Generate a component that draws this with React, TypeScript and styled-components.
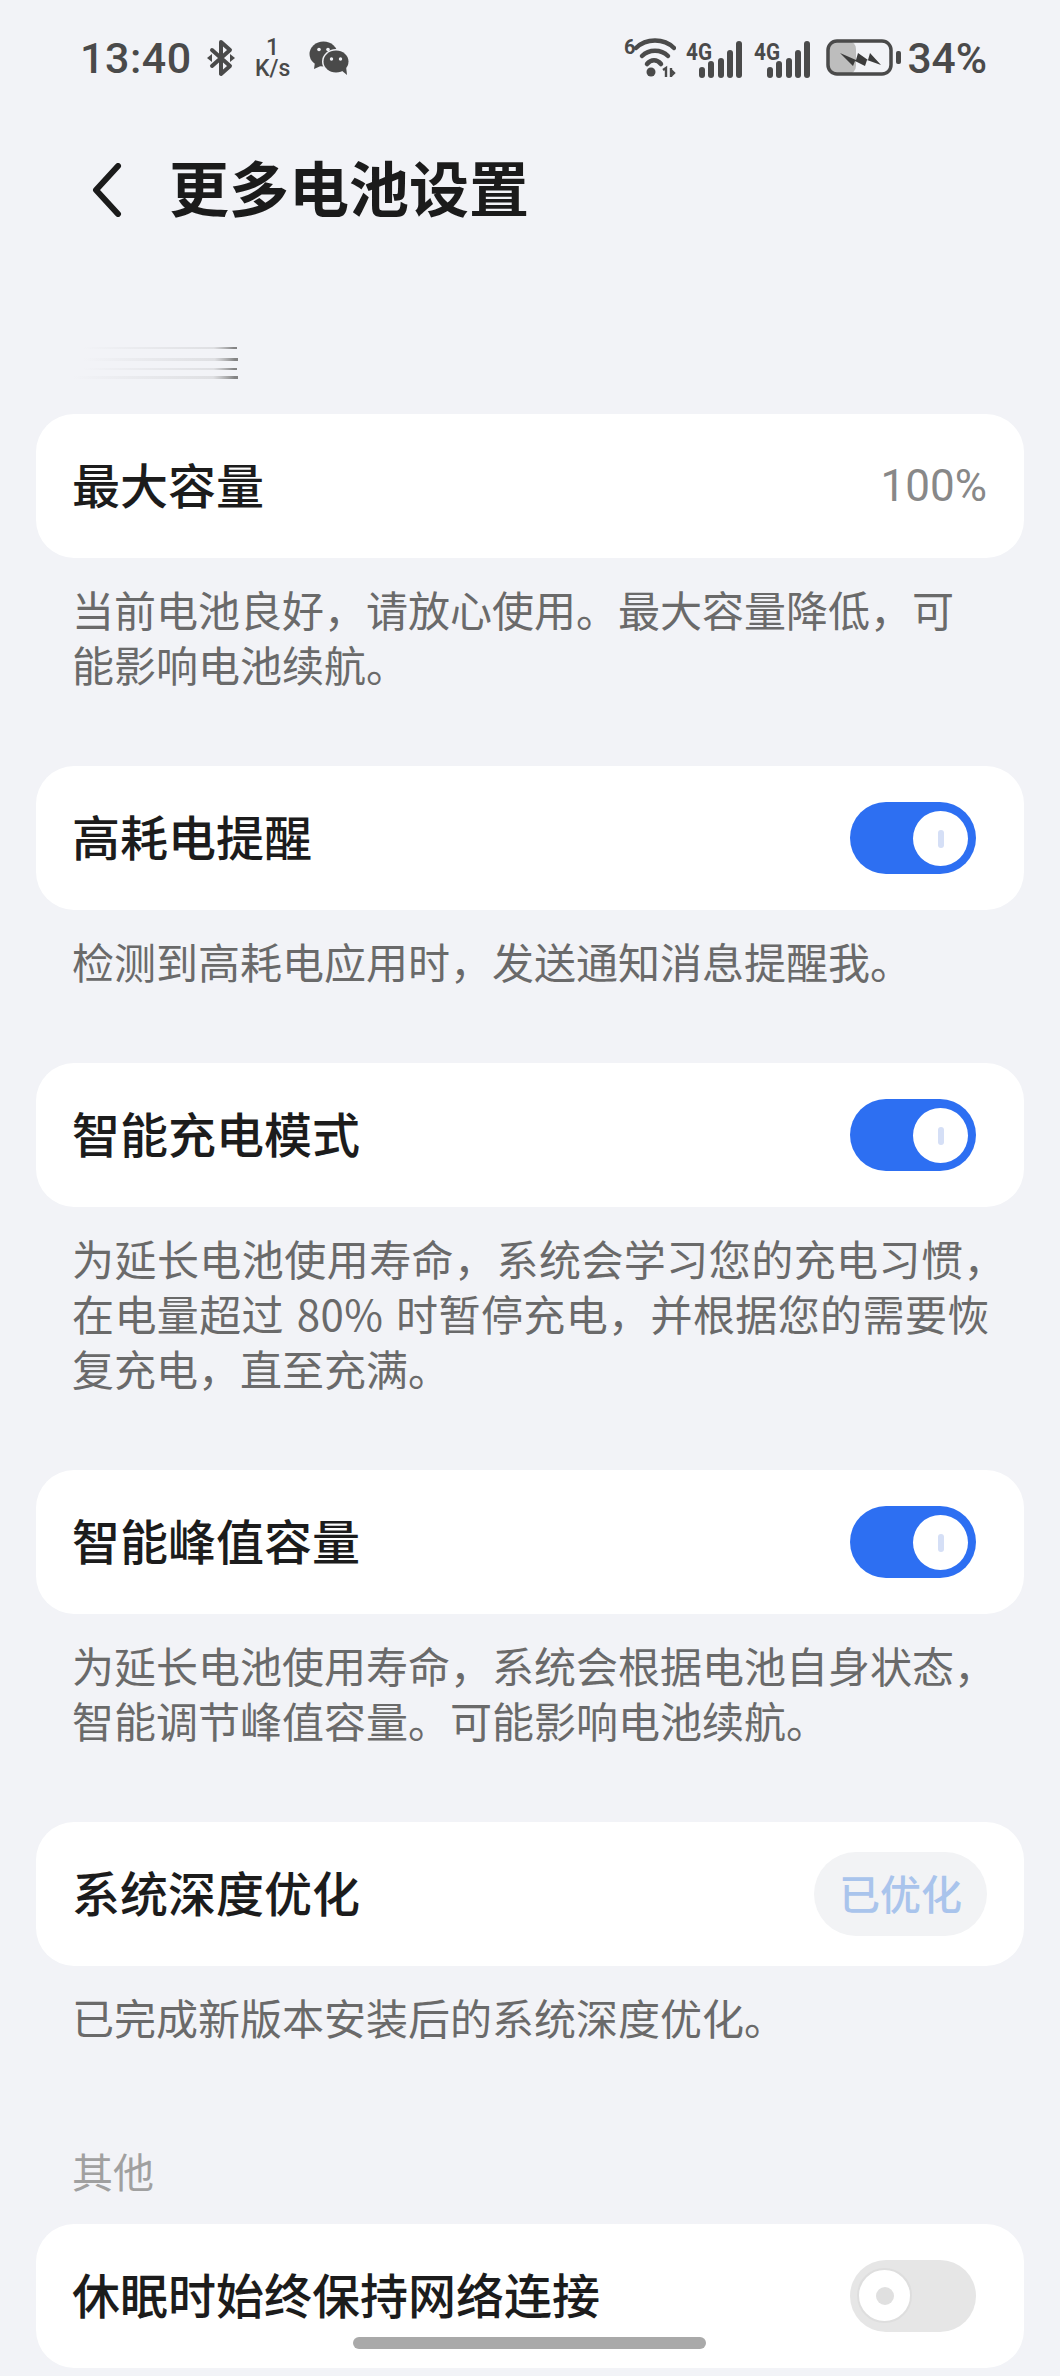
import React from "react";
import styled, { createGlobalStyle } from "styled-components";

const GlobalStyle = createGlobalStyle`
  html, body {
    margin: 0;
    padding: 0;
    background: #f2f3f7;
  }
  * {
    box-sizing: border-box;
  }
`;

const Page = styled.div`
  position: relative;
  width: 1060px;
  height: 2376px;
  overflow: hidden;
  background: #f2f3f7;
  font-family: "Noto Sans CJK SC", "Noto Sans", sans-serif;
`;

const StatusBar = styled.div`
  display: flex;
  justify-content: space-between;
  align-items: center;
  height: 116px;
  padding: 0 73px 0 80px;
  color: #4a4a4a;
`;

const StatusGroup = styled.div`
  display: flex;
  align-items: center;
`;

const Clock = styled.span`
  font-family: Roboto, sans-serif;
  font-size: 43px;
  font-weight: 500;
  letter-spacing: 0.5px;
  margin-right: 15px;
`;

const Speed = styled.div`
  display: flex;
  flex-direction: column;
  align-items: center;
  width: 40px;
  margin: 0 16px 0 18px;
  font-family: Roboto, sans-serif;
  font-weight: 500;
  line-height: 21px;
  font-size: 23px;
`;

const Percent = styled.span`
  font-family: Roboto, sans-serif;
  font-size: 42.5px;
  font-weight: 500;
  margin-left: 5px;
`;

const Header = styled.div`
  display: flex;
  align-items: center;
  height: 100px;
  padding-left: 92px;
  margin-top: 19px;
`;

const BackIcon = styled.svg`
  margin-top: 9px;
`;

const PageTitle = styled.h1`
  margin: 2px 0 0 47px;
  font-size: 60px;
  font-weight: 700;
  line-height: 80px;
  color: #1b1b1b;
`;

const GhostMark = styled.svg`
  display: block;
  margin: 109px 0 0 72px;
`;

const List = styled.div`
  padding: 0 36px;
  margin-top: 32px;
`;

const Card = styled.div`
  display: flex;
  align-items: center;
  justify-content: space-between;
  height: 144px;
  padding: 0 48px 0 36px;
  background: #fff;
  border-radius: 38px;
`;

const CardTitle = styled.span`
  padding-bottom: 6px;
  font-size: 48px;
  font-weight: 500;
  color: #1c1c1c;
`;

const CardValue = styled.span`
  margin-right: -11px;
  font-family: Roboto, sans-serif;
  font-size: 44px;
  color: #888;
`;

const Desc = styled.div`
  margin: 23px 0 75px;
  padding: 0 36px;
  font-size: 42px;
  line-height: 55px;
  color: #6a6a6a;
  white-space: nowrap;
`;

const DescLine = styled.div<{ $spread?: number; $gap?: number }>`
  letter-spacing: ${(p) => p.$spread ?? 0}px;
  word-spacing: ${(p) => p.$gap ?? 0}px;
`;

const SectionLabel = styled.div`
  margin: 99px 0 27px;
  padding: 0 36px;
  font-size: 41px;
  line-height: 54px;
  color: #a0a0a0;
`;

const Track = styled.div<{ $on: boolean }>`
  position: relative;
  width: 126px;
  height: 72px;
  border-radius: 36px;
  background: ${(p) => (p.$on ? "#2d6ff2" : "#e6e6e6")};
`;

const Thumb = styled.div<{ $on: boolean }>`
  position: absolute;
  top: ${(p) => (p.$on ? "9px" : "8px")};
  left: ${(p) => (p.$on ? "63px" : "7px")};
  display: flex;
  align-items: center;
  justify-content: center;
  width: 55px;
  height: 55px;
  border-radius: 50%;
  background: #fff;
  border: ${(p) => (p.$on ? "none" : "2px solid #dedede")};
`;

const ThumbMark = styled.div<{ $on: boolean }>`
  width: ${(p) => (p.$on ? "6px" : "18px")};
  height: 18px;
  border-radius: 9px;
  background: ${(p) => (p.$on ? "#d5dff6" : "#e0e0e0")};
`;

const DoneBadge = styled.div`
  display: flex;
  align-items: center;
  justify-content: center;
  width: 173px;
  height: 84px;
  margin-right: -11px;
  padding-bottom: 5px;
  border-radius: 42px;
  background: #f2f3f5;
  color: #a9c4ec;
  font-size: 41px;
  font-weight: 500;
`;

const HomeBar = styled.div`
  position: absolute;
  left: 353px;
  top: 2337px;
  width: 353px;
  height: 12px;
  border-radius: 6px;
  background: #a9a9a9;
`;

const Toggle = ({ on }: { on: boolean }) => (
  <Track $on={on}>
    <Thumb $on={on}>
      <ThumbMark $on={on} />
    </Thumb>
  </Track>
);

const Bluetooth = () => (
  <svg width="28" height="38" viewBox="0 0 28 38" fill="none">
    <path
      d="M5 11 L23 27 L14 35 V3 L23 11 L5 27"
      stroke="#4a4a4a"
      strokeWidth="4"
      strokeLinejoin="round"
      strokeLinecap="round"
    />
    <path d="M0 19 L5 15 V23 Z M28 19 L23 15 V23 Z" fill="#4a4a4a" />
  </svg>
);

const Wechat = () => (
  <svg width="40" height="34" viewBox="0 0 40 34">
    <ellipse cx="14.5" cy="13" rx="14" ry="12.5" fill="#4a4a4a" />
    <path d="M6 21 L5 28 L14 24 Z" fill="#4a4a4a" />
    <ellipse cx="27" cy="20.5" rx="14" ry="12.5" fill="#f2f3f7" />
    <ellipse cx="27" cy="20.5" rx="12.5" ry="11" fill="#4a4a4a" />
    <path d="M32 29 L38 34 L37 25 Z" fill="#4a4a4a" />
    <circle cx="10" cy="8.5" r="1.8" fill="#f2f3f7" />
    <circle cx="19" cy="8.5" r="1.8" fill="#f2f3f7" />
    <circle cx="22.5" cy="18" r="1.7" fill="#f2f3f7" />
    <circle cx="31.5" cy="18" r="1.7" fill="#f2f3f7" />
  </svg>
);

const Wifi = () => (
  <svg width="52" height="46" viewBox="0 -4 52 46" fill="none">
    <text x="0" y="15" fontFamily="Roboto, sans-serif" fontWeight="700" fontSize="20" fill="#4a4a4a">
      6
    </text>
    <path d="M12 9 C22 -1 40 -1 50 9" stroke="#4a4a4a" strokeWidth="4.5" strokeLinecap="round" />
    <path d="M18 17 C25 10 37 10 44 17" stroke="#4a4a4a" strokeWidth="4.5" strokeLinecap="round" />
    <path d="M23 25 C27 20 33 20 37 25" stroke="#4a4a4a" strokeWidth="4.5" strokeLinecap="round" />
    <circle cx="27" cy="33" r="4.5" fill="#4a4a4a" />
    <path d="M39 31 L42 29 V38 M47 29 V38 M47 31 L50 34 L47 37" stroke="#4a4a4a" strokeWidth="2.4" />
  </svg>
);

const Signal = () => (
  <svg width="58" height="42" viewBox="0 -4 58 42" style={{ marginLeft: 10 }}>
    <text
      x="0"
      y="19"
      fontFamily="Roboto, sans-serif"
      fontWeight="700"
      fontSize="23"
      textLength="26"
      lengthAdjust="spacingAndGlyphs"
      fill="#4a4a4a"
    >
      4G
    </text>
    <rect x="13" y="26" width="6" height="11" rx="3" fill="#4a4a4a" />
    <rect x="22" y="20" width="6" height="17" rx="3" fill="#4a4a4a" />
    <rect x="32" y="17" width="6" height="20" rx="3" fill="#4a4a4a" />
    <rect x="41" y="9" width="6" height="28" rx="3" fill="#4a4a4a" />
    <rect x="50" y="0" width="6" height="37" rx="3" fill="#4a4a4a" />
  </svg>
);

const Battery = () => (
  <svg width="76" height="38" viewBox="0 0 76 38" style={{ marginLeft: 14 }}>
    <rect x="2" y="2" width="28" height="33" fill="#bdbdbd" rx="8" />
    <rect x="2" y="2" width="63" height="33" rx="9" fill="none" stroke="#4a4a4a" strokeWidth="3.5" />
    <rect x="70" y="12" width="5" height="13" rx="2" fill="#4a4a4a" />
    <path d="M14 14 L30 21 L32 14 L42 21 L44 14 L55 26 L41 21 L39 27 L29 22 L27 27 Z" fill="#3c3c3c" />
  </svg>
);

const GhostLines = () => (
  <GhostMark width="170" height="38" viewBox="0 0 170 38">
    <defs>
      <linearGradient id="fade" x1="0" x2="1" y1="0" y2="0">
        <stop offset="0" stopColor="#9a9a9a" stopOpacity="0" />
        <stop offset="0.85" stopColor="#9a9a9a" stopOpacity="0.22" />
        <stop offset="0.98" stopColor="#777" stopOpacity="0.9" />
        <stop offset="1" stopColor="#777" stopOpacity="0.9" />
      </linearGradient>
    </defs>
    <rect x="10" y="3" width="155" height="2" fill="url(#fade)" />
    <rect x="10" y="14" width="156" height="3" fill="url(#fade)" />
    <rect x="10" y="24" width="155" height="2" fill="url(#fade)" />
    <rect x="0" y="32" width="166" height="3" fill="url(#fade)" />
  </GhostMark>
);

type Line = { text: string; spread?: number; gap?: number };

type Section = {
  title: string;
  toggle?: boolean;
  value?: string;
  badge?: string;
  desc?: Line[];
};

const sections: Section[] = [
  {
    title: "最大容量",
    value: "100%",
    desc: [{ text: "当前电池良好，请放心使用。最大容量降低，可" }, { text: "能影响电池续航。" }],
  },
  {
    title: "高耗电提醒",
    toggle: true,
    desc: [{ text: "检测到高耗电应用时，发送通知消息提醒我。" }],
  },
  {
    title: "智能充电模式",
    toggle: true,
    desc: [
      { text: "为延长电池使用寿命，系统会学习您的充电习惯，", spread: 0.45 },
      { text: "在电量超过 80% 时暂停充电，并根据您的需要恢", spread: 0.4, gap: 3 },
      { text: "复充电，直至充满。" },
    ],
  },
  {
    title: "智能峰值容量",
    toggle: true,
    desc: [{ text: "为延长电池使用寿命，系统会根据电池自身状态，" }, { text: "智能调节峰值容量。可能影响电池续航。" }],
  },
  {
    title: "系统深度优化",
    badge: "已优化",
    desc: [{ text: "已完成新版本安装后的系统深度优化。" }],
  },
];

const Row = ({ section }: { section: Section }) => (
  <Card>
    <CardTitle>{section.title}</CardTitle>
    {section.value && <CardValue>{section.value}</CardValue>}
    {section.badge && <DoneBadge>{section.badge}</DoneBadge>}
    {section.toggle !== undefined && <Toggle on={section.toggle} />}
  </Card>
);

const App = () => {
  return (
    <Page>
      <GlobalStyle />
      <StatusBar>
        <StatusGroup>
          <Clock>13:40</Clock>
          <Bluetooth />
          <Speed>
            <span>1</span>
            <span>K/s</span>
          </Speed>
          <Wechat />
        </StatusGroup>
        <StatusGroup>
          <Wifi />
          <Signal />
          <Signal />
          <Battery />
          <Percent>34%</Percent>
        </StatusGroup>
      </StatusBar>
      <Header>
        <BackIcon width="30" height="54" viewBox="0 0 30 54" fill="none">
          <path d="M26 3 L4 27 L26 51" stroke="#1b1b1b" strokeWidth="6" strokeLinecap="round" strokeLinejoin="round" />
        </BackIcon>
        <PageTitle>更多电池设置</PageTitle>
      </Header>
      <GhostLines />
      <List>
        {sections.map((section) => (
          <div key={section.title}>
            <Row section={section} />
            <Desc>
              {section.desc?.map((line) => (
                <DescLine key={line.text} $spread={line.spread} $gap={line.gap}>
                  {line.text}
                </DescLine>
              ))}
            </Desc>
          </div>
        ))}
        <SectionLabel>其他</SectionLabel>
        <Row section={{ title: "休眠时始终保持网络连接", toggle: false }} />
      </List>
      <HomeBar />
    </Page>
  );
};

export default App;
